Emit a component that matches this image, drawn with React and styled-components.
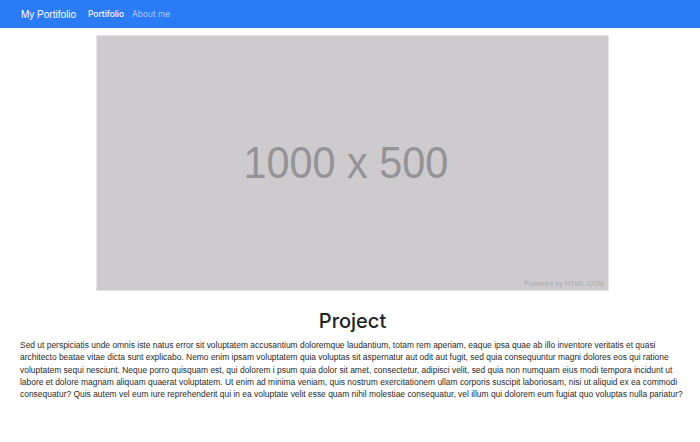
import React from "react";
import styled, { createGlobalStyle } from "styled-components";

const Global = createGlobalStyle`
  html, body { margin: 0; padding: 0; background: #fff; }
  body { font-family: "Liberation Sans", Arial, sans-serif; color: #212529; }
`;

const Nav = styled.nav`
  height: 28px;
  background: #2b7af6;
  display: flex;
  align-items: center;
  padding: 0 21px;
  gap: 12px;
`;

const Brand = styled.span`
  color: #fff;
  font-size: 10px;
`;

const Links = styled.div`
  display: flex;
  gap: 8px;
`;

const NavLink = styled.span`
  font-size: 8.4px;
  color: ${(p) => (p.$active ? "#fff" : "rgba(255,255,255,0.6)")};
  font-family: "Inter", "Liberation Sans", sans-serif;
  font-weight: ${(p) => (p.$active ? 500 : 400)};
`;

const Main = styled.main`
  padding: 7px 15px 0 20px;
  display: flex;
  flex-direction: column;
`;

const Figure = styled.div`
  align-self: center;
  margin-left: 0px;
  width: 511px;
  height: 254px;
  background: #cdcbce;
  border: 1px solid #e6e5e8;
  position: relative;
  display: flex;
  align-items: center;
  justify-content: center;
`;

const Placeholder = styled.span`
  font-family: "Liberation Sans", Arial, sans-serif;
  font-size: 44px;
  color: #949396;
  margin-right: 14px;
  transform: scale(0.94, 1.02);
`;

const Powered = styled.span`
  position: absolute;
  right: 4px;
  bottom: 3px;
  font-size: 7px;
  color: #a9a8ab;
  letter-spacing: 0.2px;
`;

const Title = styled.h1`
  margin: 18px 0 6px 0;
  text-align: center;
  font-size: 20px;
  font-weight: 500;
  color: #212529;
  font-family: "Inter", "Liberation Sans", sans-serif;
`;

const Text = styled.p`
  margin: 0;
  font-size: 8.45px;
  line-height: 12.3px;
  color: #2a2a2a;
`;

export default function App() {
  return (
    <>
      <Global />
      <Nav>
        <Brand>My Portifolio</Brand>
        <Links>
          <NavLink $active>Portifolio</NavLink>
          <NavLink>About me</NavLink>
        </Links>
      </Nav>
      <Main>
        <Figure>
          <Placeholder>1000 x 500</Placeholder>
          <Powered>Powered by HTML.COM</Powered>
        </Figure>
        <Title>Project</Title>
        <Text>
          Sed ut perspiciatis unde omnis iste natus error sit voluptatem accusantium doloremque laudantium, totam rem aperiam, eaque ipsa quae ab illo inventore veritatis et quasi architecto beatae vitae dicta sunt explicabo. Nemo enim ipsam voluptatem quia voluptas sit aspernatur aut odit aut fugit, sed quia consequuntur magni dolores eos qui ratione voluptatem sequi nesciunt. Neque porro quisquam est, qui dolorem i psum quia dolor sit amet, consectetur, adipisci velit, sed quia non numquam eius modi tempora incidunt ut labore et dolore magnam aliquam quaerat voluptatem. Ut enim ad minima veniam, quis nostrum exercitationem ullam corporis suscipit laboriosam, nisi ut aliquid ex ea commodi consequatur? Quis autem vel eum iure reprehenderit qui in ea voluptate velit esse quam nihil molestiae consequatur, vel illum qui dolorem eum fugiat quo voluptas nulla pariatur?
        </Text>
      </Main>
    </>
  );
}
